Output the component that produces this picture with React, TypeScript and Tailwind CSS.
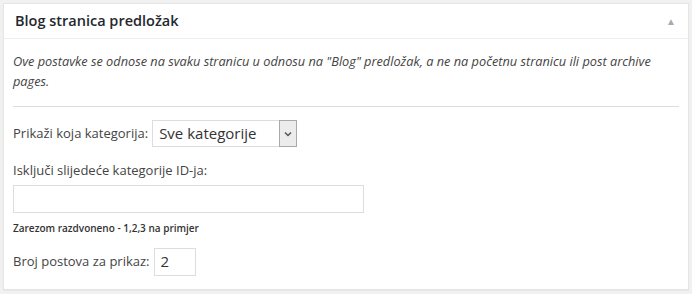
const App = () => {
  return (
    <div className="w-[692px] h-[294px] bg-[#f1f1f1] p-[3px] font-['Open_Sans',sans-serif] text-[#444]">
      {/* metabox */}
      <div className="bg-white border border-[#e5e5e5] shadow-[0_1px_1px_rgba(0,0,0,0.04)] h-[287px]">
        <div className="flex items-center justify-between h-[35px] pl-[11px] pr-[12px] border-b border-[#eee]">
          <h2 className="text-[14.5px] font-semibold text-[#23282d]">Blog stranica predložak</h2>
          <span className="text-[10px] text-[#aaa] leading-none">▲</span>
        </div>
        <div className="px-[9px] pt-[12px]">
          <p className="italic text-[12.75px] leading-[20px] pr-[10px]">
            Ove postavke se odnose na svaku stranicu u odnosu na "Blog" predložak, a ne na početnu stranicu ili post archive pages.
          </p>
          <hr className="mt-[15px] border-t border-[#ddd]" />
          <div className="flex items-center gap-[4px] mt-[13px] text-[13px]">
            <span>Prikaži koja kategorija:</span>
            <div className="flex h-[27px] w-[145px] border border-[#ddd]">
              <span className="flex-1 pl-[6px] text-[15px] leading-[25px] text-[#333]">Sve kategorije</span>
              <span className="w-[18px] -my-px -mr-px flex items-center justify-center bg-[#ececec] border border-[#a9a9a9]">
                <svg width="8" height="6" viewBox="0 0 8 6">
                  <path d="M1 1.5 L4 4.5 L7 1.5" fill="none" stroke="#555" strokeWidth="1.5" />
                </svg>
              </span>
            </div>
          </div>
          <div className="mt-[14px] text-[13px]">Isključi slijedeće kategorije ID-ja:</div>
          <div className="mt-[4px] w-[351px] h-[28px] border border-[#ddd]" />
          <div className="mt-[8px] text-[10px] font-semibold text-[#333]">Zarezom razdvoneno - 1,2,3 na primjer</div>
          <div className="flex items-center gap-[4px] mt-[12px] text-[13px]">
            <span>Broj postova za prikaz:</span>
            <span className="w-[42px] h-[28px] border border-[#ddd] pl-[6px] text-[15px] leading-[24px] text-[#333]">2</span>
          </div>
        </div>
      </div>
    </div>
  );
};

export default App;
